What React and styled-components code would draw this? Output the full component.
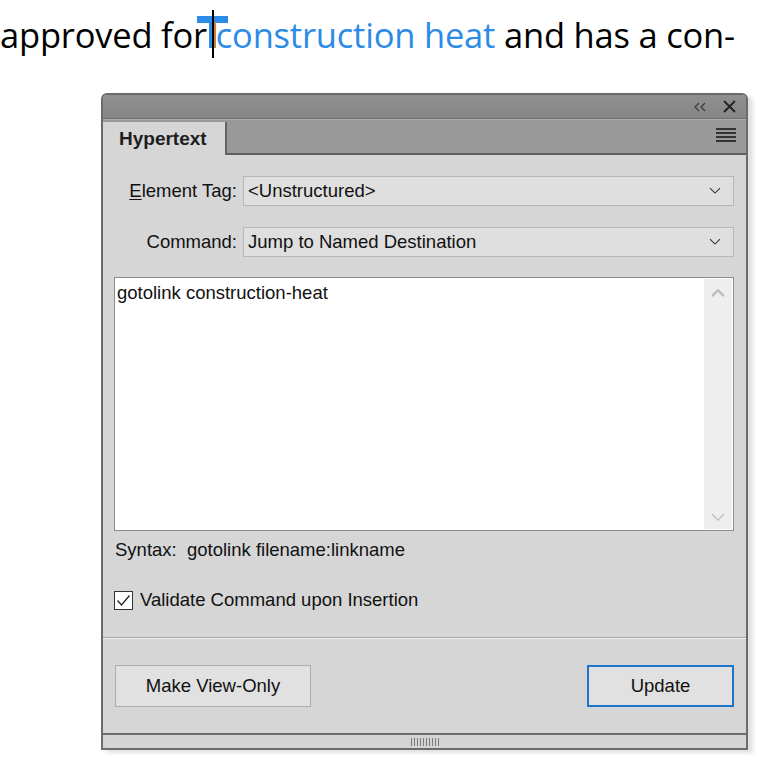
import React from 'react';
import styled, { createGlobalStyle } from 'styled-components';

const GlobalStyle = createGlobalStyle`
  html, body {
    margin: 0;
    padding: 0;
    background: #ffffff;
  }
  body {
    font-family: "Liberation Sans", Arial, sans-serif;
  }
`;

const Page = styled.div`
  width: 766px;
  height: 767px;
  overflow: hidden;
  background: #fff;
`;

const Headline = styled.div`
  height: 93px;
  font-family: "Open Sans", sans-serif;
  font-size: 34.5px;
  line-height: 70px;
  white-space: nowrap;
  color: #000;
  letter-spacing: -0.2px;
`;

const LinkText = styled.span`
  position: relative;
  display: inline-block;
  color: #2b8be6;
`;

// text cursor + hyperlink marker drawn over the text
const Marker = styled.span`
  position: absolute;
  left: ${p => p.$left}px;
  top: ${p => p.$top}px;
  width: ${p => p.$w}px;
  height: ${p => p.$h}px;
  background: ${p => p.$color};
`;

const Panel = styled.div`
  width: 643px;
  margin-left: 101px;
  border: 2px solid #6b6b6b;
  border-radius: 6px 6px 0 0;
  background: #d6d6d6;
  box-shadow: 5px 3px 4px rgba(0, 0, 0, 0.12);
  overflow: hidden;
`;

const TitleBar = styled.div`
  height: 23px;
  background: linear-gradient(#8f8f8f, #878787);
  border-bottom: 1px solid #6f6f6f;
  display: flex;
  align-items: center;
  justify-content: flex-end;
  gap: 16px;
  padding-right: 10px;
`;

const TitleButton = styled.span`
  display: flex;
  align-items: center;
  justify-content: center;
  color: #2a2a2a;
`;

const TabBar = styled.div`
  height: 36px;
  display: flex;
  align-items: flex-end;
  background: #999999;
  border-top: 1px solid #acacac;
  box-sizing: border-box;
`;

const Tab = styled.div`
  width: 124px;
  height: 33px;
  box-sizing: border-box;
  background: #d6d6d6;
  border-right: 2px solid #646464;
  font-weight: bold;
  font-size: 19px;
  color: #1e1e1e;
  padding-left: 16px;
  display: flex;
  align-items: center;
`;

const TabFill = styled.div`
  flex: 1;
  height: 100%;
  box-sizing: border-box;
  border-bottom: 2px solid #5e5e5e;
  display: flex;
  align-items: center;
  justify-content: flex-end;
  padding: 0 10px 2px 0;
`;

const Content = styled.div`
  padding: 21px 12px 26px 11px;
  border-bottom: 1px solid #a3a3a3;
  box-shadow: 0 1px 0 #f2f2f2;
  font-size: 18.5px;
  color: #111;
`;

const FieldRow = styled.div`
  display: grid;
  grid-template-columns: 123px 1fr;
  column-gap: 6px;
  align-items: center;
  margin-bottom: ${p => p.$gap}px;
`;

const Label = styled.label`
  text-align: right;
  white-space: nowrap;
  u { text-decoration: underline; text-underline-offset: 2px; }
`;

const Select = styled.div`
  height: 30px;
  box-sizing: border-box;
  border: 1px solid #b7b7b7;
  background: #dfdfdf;
  display: flex;
  align-items: center;
  justify-content: space-between;
  padding: 0 12px 0 4px;
  white-space: nowrap;
`;

const TextBox = styled.div`
  height: 254px;
  box-sizing: border-box;
  border: 1px solid #8c8c8c;
  background: #fff;
  display: flex;
`;

const TextValue = styled.div`
  flex: 1;
  padding: 3px 2px;
  line-height: 24px;
`;

const ScrollTrack = styled.div`
  width: 28px;
  margin: 1px;
  background: #eeeeee;
  display: flex;
  flex-direction: column;
  justify-content: space-between;
  align-items: center;
  padding: 10px 0 8px;
`;

const SyntaxLine = styled.div`
  margin-top: 8px;
  line-height: 22px;
  padding-left: 1px;
  white-space: pre;
`;

const CheckRow = styled.div`
  margin-top: 28px;
  display: flex;
  align-items: center;
  gap: 7px;
  height: 22px;
`;

const CheckBox = styled.span`
  width: 19px;
  height: 19px;
  box-sizing: border-box;
  border: 1px solid #333;
  background: #fff;
  display: flex;
  align-items: center;
  justify-content: center;
`;

const ButtonRow = styled.div`
  display: flex;
  justify-content: space-between;
  padding: 27px 12px 26px 12px;
`;

const Button = styled.button`
  height: 42px;
  width: ${p => p.$w}px;
  box-sizing: border-box;
  background: #e1e1e1;
  border: ${p => (p.$primary ? '2px solid #1d75cc' : '1px solid #adadad')};
  font-family: "Liberation Sans", Arial, sans-serif;
  font-size: 18.5px;
  color: #111;
  padding: 0;
`;

const BottomBar = styled.div`
  height: 13px;
  border-top: 2px solid #6b6b6b;
  background: #d4d4d4;
  display: flex;
  justify-content: center;
  align-items: center;
`;

const Grip = styled.div`
  display: flex;
  gap: 2px;
  span {
    width: 1px;
    height: 8px;
    background: #7a7a7a;
  }
`;

const Chevron = ({ dir = 'down', color = '#333', size = 12 }) => (
  <svg width={size} height={size * 0.6} viewBox="0 0 12 7">
    <polyline
      points={dir === 'down' ? '1,1 6,6 11,1' : '1,6 6,1 11,6'}
      fill="none"
      stroke={color}
      strokeWidth={dir === 'down' ? 1.1 : 2}
    />
  </svg>
);

const App = () => {
  return (
    <Page>
      <GlobalStyle />
      <Headline>
        approved for{' '}
        <LinkText>
          <Marker $left={-19} $top={16} $w={31} $h={7} $color="#2b8be6" />
          <Marker $left={-7} $top={16} $w={6} $h={32} $color="#2b8be6" />
          <Marker $left={-3} $top={22} $w={3} $h={26} $color="#c8813a" />
          <Marker $left={-4} $top={10} $w={2} $h={48} $color="#000" />
          construction heat
        </LinkText>{' '}
        and has a con-
      </Headline>

      <Panel>
        <TitleBar>
          <TitleButton>
            <svg width="13" height="10" viewBox="0 0 13 10">
              <polyline points="5,1 1,5 5,9" fill="none" stroke="#3a3a3a" strokeWidth="1.2" />
              <polyline points="11,1 7,5 11,9" fill="none" stroke="#3a3a3a" strokeWidth="1.2" />
            </svg>
          </TitleButton>
          <TitleButton>
            <svg width="13" height="13" viewBox="0 0 13 13">
              <path d="M1 1 L12 12 M12 1 L1 12" stroke="#222" strokeWidth="1.8" />
            </svg>
          </TitleButton>
        </TitleBar>

        <TabBar>
          <Tab>Hypertext</Tab>
          <TabFill>
            <svg width="20" height="15" viewBox="0 0 20 15">
              <rect x="0" y="0" width="20" height="2" fill="#333" />
              <rect x="0" y="4" width="20" height="2" fill="#333" />
              <rect x="0" y="8" width="20" height="2" fill="#333" />
              <rect x="0" y="12" width="20" height="2" fill="#333" />
            </svg>
          </TabFill>
        </TabBar>

        <Content>
          <FieldRow $gap={21}>
            <Label><u>E</u>lement Tag:</Label>
            <Select>
              &lt;Unstructured&gt;
              <Chevron />
            </Select>
          </FieldRow>
          <FieldRow $gap={20}>
            <Label>Command:</Label>
            <Select>
              Jump to Named Destination
              <Chevron />
            </Select>
          </FieldRow>

          <TextBox>
            <TextValue>gotolink construction-heat</TextValue>
            <ScrollTrack>
              <Chevron dir="up" color="#bdbdbd" size={14} />
              <Chevron dir="down" color="#bdbdbd" size={14} />
            </ScrollTrack>
          </TextBox>

          <SyntaxLine>Syntax:  gotolink filename:linkname</SyntaxLine>

          <CheckRow>
            <CheckBox>
              <svg width="15" height="13" viewBox="0 0 15 13">
                <polyline points="1.5,6.5 5.5,11 13.5,1.5" fill="none" stroke="#222" strokeWidth="1.3" />
              </svg>
            </CheckBox>
            Validate Command upon Insertion
          </CheckRow>
        </Content>

        <ButtonRow>
          <Button $w={196}>Make View-Only</Button>
          <Button $w={147} $primary>Update</Button>
        </ButtonRow>

        <BottomBar>
          <Grip>
            {Array.from({ length: 10 }).map((_, i) => (
              <span key={i} />
            ))}
          </Grip>
        </BottomBar>
      </Panel>
    </Page>
  );
};

export default App;
